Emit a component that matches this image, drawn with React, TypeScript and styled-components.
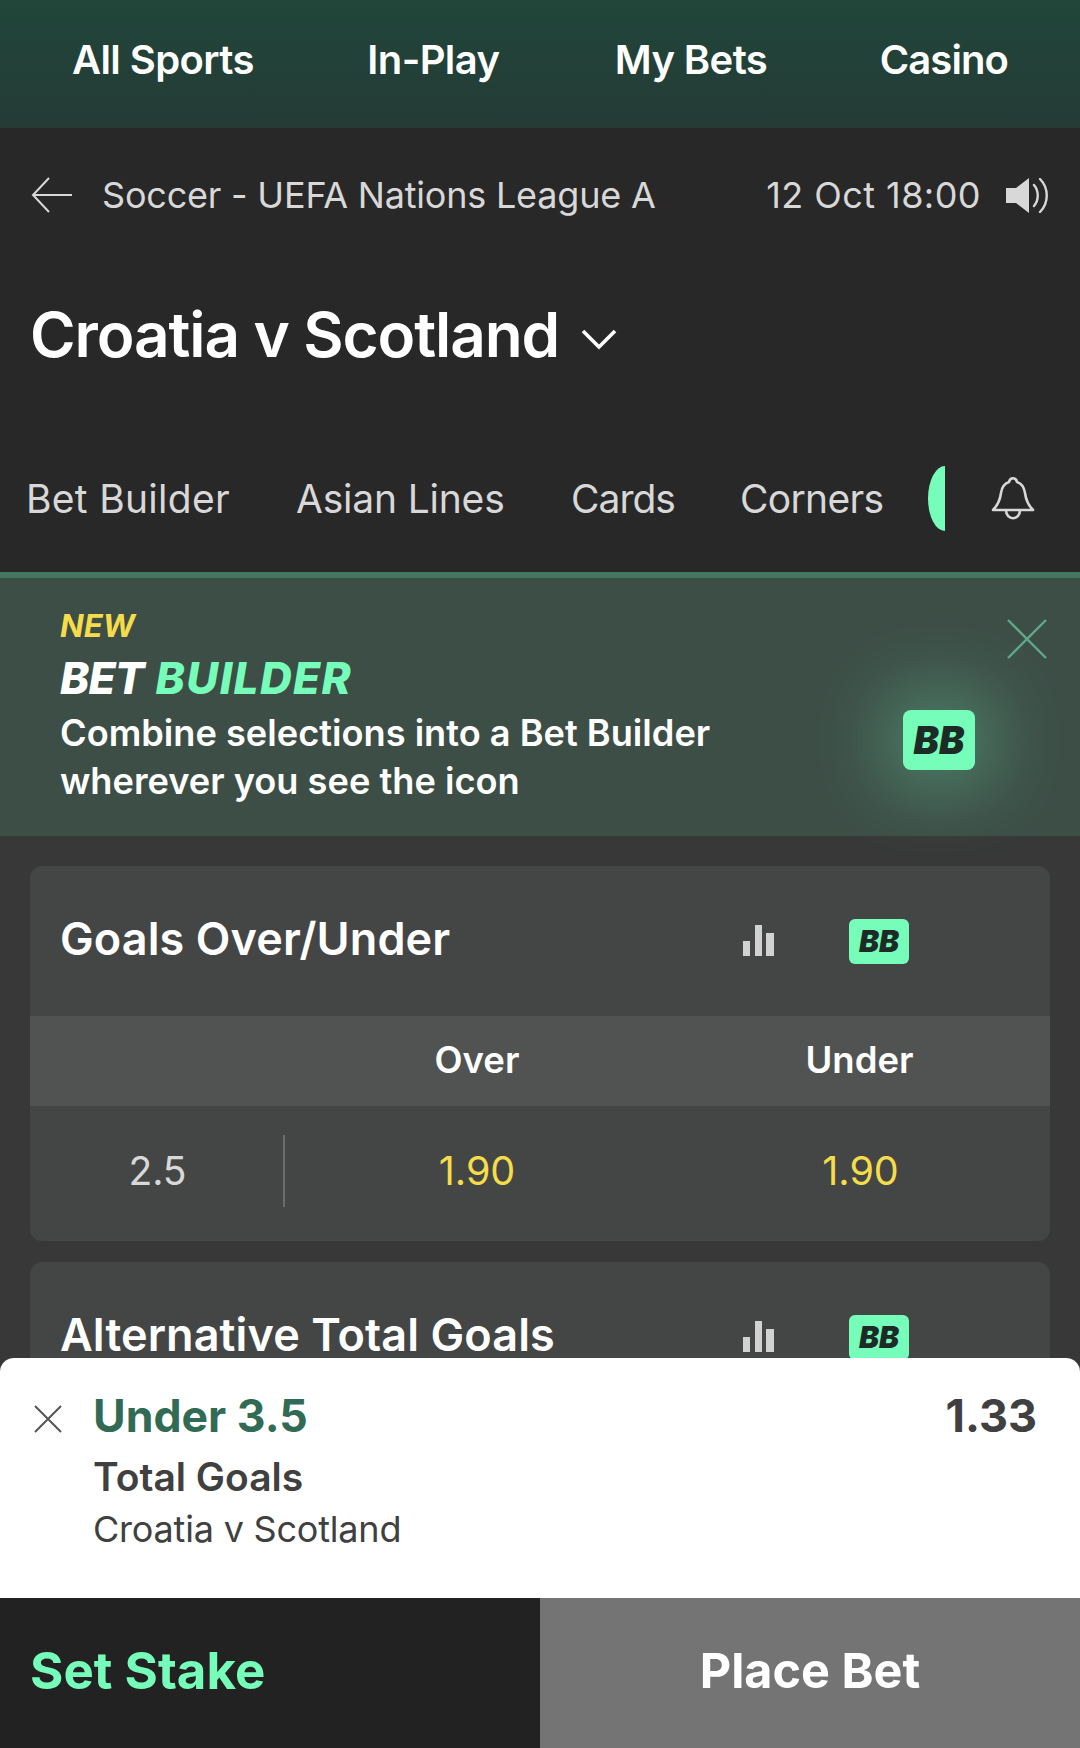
import React from 'react'
import styled, { createGlobalStyle } from 'styled-components'

const GlobalStyle = createGlobalStyle`
    html, body {
        margin: 0;
        padding: 0;
        background: #383838;
    }
    * { box-sizing: border-box; }
`

const MINT = '#75fdb9'

const BetPage = () => (
    <Page>
        <GlobalStyle />
        <TopNav>
            <NavItem>All Sports</NavItem>
            <NavItem>In-Play</NavItem>
            <NavItem>My Bets</NavItem>
            <NavItem>Casino</NavItem>
        </TopNav>

        <MatchHeader>
            <BreadcrumbRow>
                <svg width="44" height="38" viewBox="0 0 44 38" fill="none" stroke="#d8d8d8" strokeWidth="2">
                    <path d="M42 19H3M19 2 3 19l16 17" />
                </svg>
                <Breadcrumb>Soccer - UEFA Nations League A</Breadcrumb>
                <KickOff>12 Oct 18:00</KickOff>
                <svg width="44" height="35" viewBox="0 0 44 35" fill="none">
                    <path d="M0 10h10L23 0v35L10 25H0z" fill="#d8d8d8" />
                    <path d="M28 7c5 6 5 15 0 21M34 1c9 9 9 24 0 33" stroke="#d8d8d8" strokeWidth="2.4" strokeLinecap="round" />
                </svg>
            </BreadcrumbRow>
            <TitleRow>
                <MatchTitle>Croatia v Scotland</MatchTitle>
                <svg width="36" height="22" viewBox="0 0 36 22" fill="none" stroke="#fff" strokeWidth="3.6">
                    <path d="M2 3l16 16L34 3" />
                </svg>
            </TitleRow>
        </MatchHeader>

        <TabBar>
            <Tab $w={203} $gap={67} $track={0.3}>Bet Builder</Tab>
            <Tab $w={208} $gap={67} $track={-0.2}>Asian Lines</Tab>
            <Tab $w={104} $gap={65} $track={-1}>Cards</Tab>
            <Tab $w={143} $gap={45} $track={-0.7}>Corners</Tab>
            <HalfDot />
            <BellWrap>
                <svg width="44" height="46" viewBox="0 0 44 46" fill="none" stroke="#d8d8d8" strokeWidth="2.6" strokeLinejoin="round">
                    <path d="M2 35c5-5 7-9 8-17 1-7 5-10 8-11 1-5 7-5 8 0 3 1 7 4 8 11 1 8 3 12 8 17z" />
                    <path d="M15 35c0 11 14 11 14 0" />
                </svg>
            </BellWrap>
        </TabBar>

        <Banner>
            <BannerText>
                <NewTag>NEW</NewTag>
                <BannerTitle>BET <span>BUILDER</span></BannerTitle>
                <BannerCopy>Combine selections into a Bet Builder<br />wherever you see the icon</BannerCopy>
            </BannerText>
            <BannerClose width="40" height="40" viewBox="0 0 40 40" fill="none" stroke="#5fa88a" strokeWidth="2.4">
                <path d="M1 1l38 38M39 1 1 39" />
            </BannerClose>
            <BigBadge>BB</BigBadge>
        </Banner>

        <Cards>
            <MarketCard>
                <MarketHead>
                    <MarketName>Goals Over/Under</MarketName>
                    <Bars />
                    <SmallBadge>BB</SmallBadge>
                </MarketHead>
                <ColumnHead>
                    <HeadCell>Over</HeadCell>
                    <HeadCell>Under</HeadCell>
                </ColumnHead>
                <OddsRow>
                    <LineCell>2.5</LineCell>
                    <Odds>1.90</Odds>
                    <Odds>1.90</Odds>
                </OddsRow>
            </MarketCard>
            <MarketCard>
                <MarketHead>
                    <MarketName>Alternative Total Goals</MarketName>
                    <Bars />
                    <SmallBadge>BB</SmallBadge>
                </MarketHead>
            </MarketCard>
        </Cards>

        <BetSlip>
            <Selection>
                <SlipClose width="30" height="30" viewBox="0 0 30 30" fill="none" stroke="#555" strokeWidth="2">
                    <path d="M2 2l26 26M28 2 2 28" />
                </SlipClose>
                <SelectionText>
                    <SelectionName>Under 3.5</SelectionName>
                    <SelectionMarket>Total Goals</SelectionMarket>
                    <SelectionEvent>Croatia v Scotland</SelectionEvent>
                </SelectionText>
                <SelectionPrice>1.33</SelectionPrice>
            </Selection>
            <SlipActions>
                <SetStake>Set Stake</SetStake>
                <PlaceBet>Place Bet</PlaceBet>
            </SlipActions>
        </BetSlip>
    </Page>
)

const Bars = () => (
    <BarsIcon width="32" height="32" viewBox="0 0 32 32" fill="#d2d2d2">
        <rect x="0" y="16" width="7" height="15" />
        <rect x="12" y="0" width="7" height="31" />
        <rect x="23" y="8" width="8" height="23" />
    </BarsIcon>
)

export default BetPage

const Page = styled.div`
    position: relative;
    width: 1080px;
    height: 1748px;
    overflow: hidden;
    background: #383838;
    font-family: Inter, "Liberation Sans", sans-serif;
`

const TopNav = styled.nav`
    height: 128px;
    padding: 0 72px 10px;
    display: flex;
    align-items: center;
    justify-content: space-between;
    background: linear-gradient(180deg, #21463a 0%, #243b36 100%);
`

const NavItem = styled.div`
    color: #fff;
    font-size: 40px;
    font-weight: 600;
    letter-spacing: -0.6px;
    white-space: nowrap;

    &:nth-child(2) { margin-left: 1px; }
    &:nth-child(3) { margin-left: 3px; }
    &:last-child { letter-spacing: -0.9px; }
`

const MatchHeader = styled.header`
    height: 296px;
    padding: 47px 30px 0;
    background: #282828;
`

const BreadcrumbRow = styled.div`
    display: flex;
    align-items: center;
    height: 40px;
`

const Breadcrumb = styled.div`
    margin-left: 28px;
    flex: 1;
    color: #d8d8d8;
    font-size: 36px;
    letter-spacing: -0.2px;
    white-space: nowrap;
`

const KickOff = styled.div`
    margin-right: 25px;
    color: #d8d8d8;
    font-size: 36px;
    letter-spacing: 0.45px;
    white-space: nowrap;
`

const TitleRow = styled.div`
    margin-top: 85px;
    display: flex;
    align-items: center;
    gap: 22px;

    svg { margin-top: 8px; }
`

const MatchTitle = styled.h1`
    margin: 0;
    color: #fff;
    font-size: 62px;
    line-height: 70px;
    font-weight: 600;
    letter-spacing: -1.1px;
    white-space: nowrap;
`

const TabBar = styled.div`
    height: 148px;
    padding: 0 0 0 26px;
    display: flex;
    align-items: center;
    background: #282828;
`

const Tab = styled.div<{ $w: number; $gap: number; $track: number }>`
    flex: none;
    width: ${({ $w }) => $w}px;
    margin-right: ${({ $gap }) => $gap}px;
    color: #d8d8d8;
    font-size: 39px;
    letter-spacing: ${({ $track }) => $track}px;
    white-space: nowrap;
`

const HalfDot = styled.div`
    flex: none;
    width: 17px;
    height: 65px;
    margin-left: 0;
    background: ${MINT};
    border-radius: 100% 0 0 100% / 50% 0 0 50%;
`

const BellWrap = styled.div`
    margin-left: 46px;
    display: flex;
`

const Banner = styled.section`
    position: relative;
    height: 264px;
    padding: 30px 60px 0;
    background: #3d4e47;
    border-top: 6px solid #41775f;
`

const BannerText = styled.div`
    display: flex;
    flex-direction: column;
`

const NewTag = styled.div`
    color: #f5dc4a;
    font-size: 31px;
    line-height: 36px;
    font-weight: 700;
    font-style: italic;
`

const BannerTitle = styled.div`
    margin-top: 8px;
    color: #fff;
    font-size: 44px;
    line-height: 52px;
    font-weight: 800;
    font-style: italic;
    letter-spacing: -0.8px;
    word-spacing: 3px;

    span {
        color: ${MINT};
        letter-spacing: 1.4px;
    }
`

const BannerCopy = styled.div`
    margin-top: 5px;
    color: #fff;
    font-size: 36.2px;
    line-height: 48px;
    font-weight: 600;
    white-space: nowrap;
`

const BannerClose = styled.svg`
    position: absolute;
    top: 41px;
    left: 1007px;
`

const BigBadge = styled.div`
    position: absolute;
    top: 132px;
    left: 903px;
    width: 72px;
    height: 60px;
    display: flex;
    align-items: center;
    justify-content: center;
    border-radius: 8px;
    background: ${MINT};
    box-shadow: 0 0 70px 22px rgba(117, 253, 185, 0.28);
    color: #1d2b26;
    font-size: 38px;
    font-weight: 900;
    font-style: italic;
`

const Cards = styled.div`
    padding: 30px 30px 0;
    display: flex;
    flex-direction: column;
    gap: 21px;
`

const MarketCard = styled.article`
    border-radius: 12px;
    overflow: hidden;
    background: #444645;
`

const MarketHead = styled.div`
    height: 150px;
    padding: 0 0 6px 30px;
    display: flex;
    align-items: center;
`

const MarketName = styled.div`
    width: 683px;
    color: #fff;
    font-size: 45px;
    font-weight: 600;
    letter-spacing: 0.1px;
    white-space: nowrap;
`

const BarsIcon = styled.svg`
    margin-top: 5px;
`

const SmallBadge = styled.div`
    margin-left: 74px;
    margin-top: 6px;
    width: 60px;
    height: 45px;
    display: flex;
    align-items: center;
    justify-content: center;
    border-radius: 6px;
    background: ${MINT};
    color: #1d2b26;
    font-size: 30px;
    font-weight: 900;
    font-style: italic;
`

const ColumnHead = styled.div`
    height: 90px;
    padding: 0 0 2px 255px;
    display: grid;
    grid-template-columns: 384px 381px;
    align-items: center;
    background: #505352;
`

const HeadCell = styled.div`
    text-align: center;
    color: #fff;
    font-size: 36.5px;
    font-weight: 600;
`

const OddsRow = styled.div`
    height: 135px;
    padding-bottom: 6px;
    display: grid;
    grid-template-columns: 255px 384px 383px;
    align-items: center;
`

const LineCell = styled.div`
    height: 72px;
    padding-left: 2px;
    display: flex;
    align-items: center;
    justify-content: center;
    border-right: 2px solid #6b6d6c;
    color: #d8d8d8;
    font-size: 39px;
`

const Odds = styled.div`
    text-align: center;
    color: #f5dc4a;
    font-size: 39.5px;
`

const BetSlip = styled.aside`
    position: absolute;
    left: 0;
    right: 0;
    top: 1358px;
    height: 390px;
    display: flex;
    flex-direction: column;
`

const Selection = styled.div`
    height: 240px;
    padding: 29px 43px 0 33px;
    display: flex;
    align-items: flex-start;
    border-radius: 14px 14px 0 0;
    background: #fff;
`

const SlipClose = styled.svg`
    margin-top: 17px;
`

const SelectionText = styled.div`
    margin-left: 30px;
    flex: 1;
    display: flex;
    flex-direction: column;
`

const SelectionName = styled.div`
    color: #326b55;
    font-size: 44.6px;
    line-height: 58px;
    font-weight: 700;
`

const SelectionMarket = styled.div`
    margin-top: 4px;
    color: #404040;
    font-size: 39px;
    line-height: 56px;
    font-weight: 600;
`

const SelectionEvent = styled.div`
    color: #404040;
    font-size: 36px;
    line-height: 48px;
    letter-spacing: -0.2px;
`

const SelectionPrice = styled.div`
    color: #404040;
    font-size: 45px;
    line-height: 58px;
    font-weight: 700;
`

const SlipActions = styled.div`
    height: 150px;
    display: grid;
    grid-template-columns: 540px 540px;
`

const SetStake = styled.div`
    padding: 0 0 6px 30px;
    display: flex;
    align-items: center;
    background: #222;
    color: ${MINT};
    font-size: 51px;
    font-weight: 700;
`

const PlaceBet = styled.div`
    padding-bottom: 6px;
    display: flex;
    align-items: center;
    justify-content: center;
    background: #747474;
    color: #fff;
    font-size: 48.5px;
    font-weight: 700;
`
